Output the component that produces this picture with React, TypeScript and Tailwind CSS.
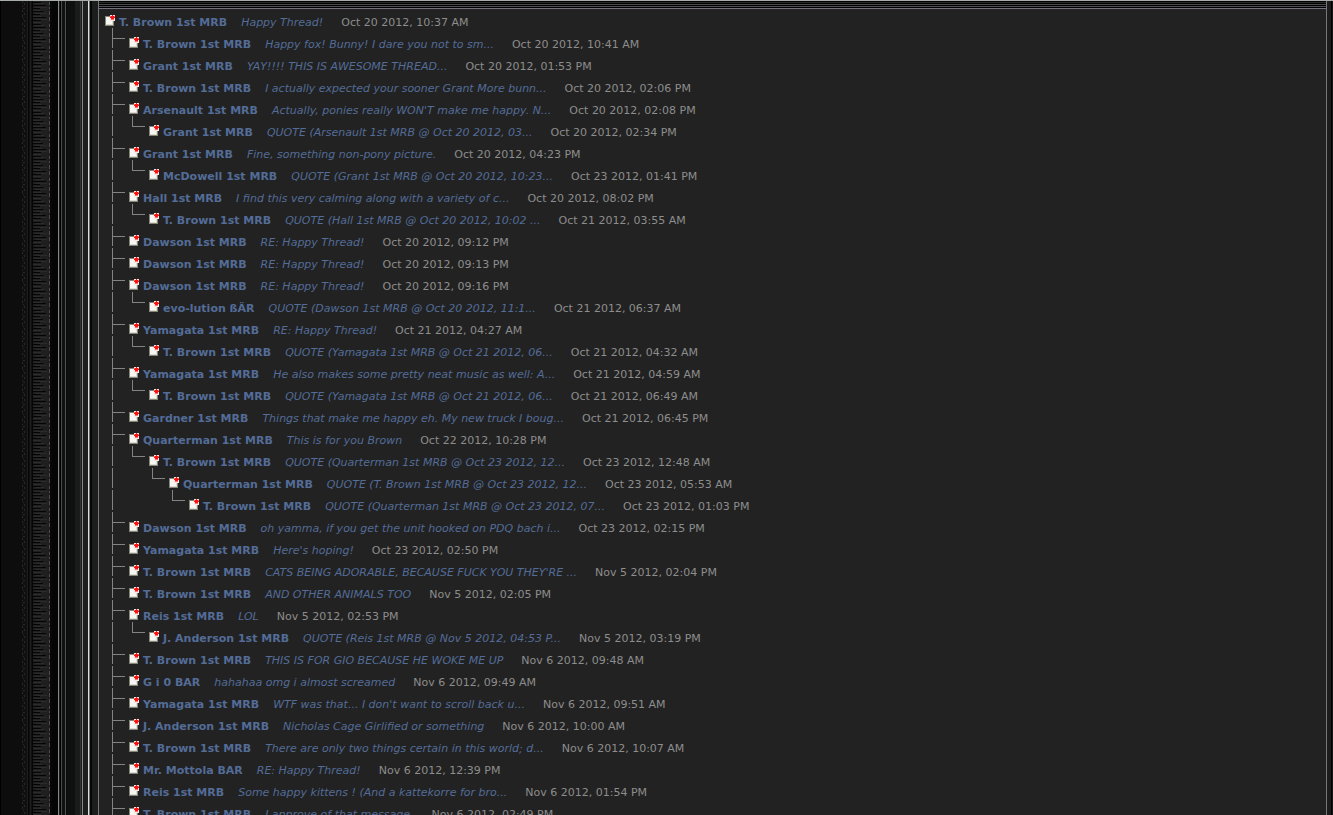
import React from "react";

type Post = [depth: number, author: string, text: string, date: string];

const posts: Post[] = [
  [0, "T. Brown 1st MRB", "Happy Thread!", "Oct 20 2012, 10:37 AM"],
  [1, "T. Brown 1st MRB", "Happy fox! Bunny! I dare you not to sm...", "Oct 20 2012, 10:41 AM"],
  [1, "Grant 1st MRB", "YAY!!!! THIS IS AWESOME THREAD...", "Oct 20 2012, 01:53 PM"],
  [1, "T. Brown 1st MRB", "I actually expected your sooner Grant More bunn...", "Oct 20 2012, 02:06 PM"],
  [1, "Arsenault 1st MRB", "Actually, ponies really WON'T make me happy. N...", "Oct 20 2012, 02:08 PM"],
  [2, "Grant 1st MRB", "QUOTE (Arsenault 1st MRB @ Oct 20 2012, 03...", "Oct 20 2012, 02:34 PM"],
  [1, "Grant 1st MRB", "Fine, something non-pony picture.", "Oct 20 2012, 04:23 PM"],
  [2, "McDowell 1st MRB", "QUOTE (Grant 1st MRB @ Oct 20 2012, 10:23...", "Oct 23 2012, 01:41 PM"],
  [1, "Hall 1st MRB", "I find this very calming along with a variety of c...", "Oct 20 2012, 08:02 PM"],
  [2, "T. Brown 1st MRB", "QUOTE (Hall 1st MRB @ Oct 20 2012, 10:02 ...", "Oct 21 2012, 03:55 AM"],
  [1, "Dawson 1st MRB", "RE: Happy Thread!", "Oct 20 2012, 09:12 PM"],
  [1, "Dawson 1st MRB", "RE: Happy Thread!", "Oct 20 2012, 09:13 PM"],
  [1, "Dawson 1st MRB", "RE: Happy Thread!", "Oct 20 2012, 09:16 PM"],
  [2, "evo-lution ßÄR", "QUOTE (Dawson 1st MRB @ Oct 20 2012, 11:1...", "Oct 21 2012, 06:37 AM"],
  [1, "Yamagata 1st MRB", "RE: Happy Thread!", "Oct 21 2012, 04:27 AM"],
  [2, "T. Brown 1st MRB", "QUOTE (Yamagata 1st MRB @ Oct 21 2012, 06...", "Oct 21 2012, 04:32 AM"],
  [1, "Yamagata 1st MRB", "He also makes some pretty neat music as well: A...", "Oct 21 2012, 04:59 AM"],
  [2, "T. Brown 1st MRB", "QUOTE (Yamagata 1st MRB @ Oct 21 2012, 06...", "Oct 21 2012, 06:49 AM"],
  [1, "Gardner 1st MRB", "Things that make me happy eh. My new truck I boug...", "Oct 21 2012, 06:45 PM"],
  [1, "Quarterman 1st MRB", "This is for you Brown", "Oct 22 2012, 10:28 PM"],
  [2, "T. Brown 1st MRB", "QUOTE (Quarterman 1st MRB @ Oct 23 2012, 12...", "Oct 23 2012, 12:48 AM"],
  [3, "Quarterman 1st MRB", "QUOTE (T. Brown 1st MRB @ Oct 23 2012, 12...", "Oct 23 2012, 05:53 AM"],
  [4, "T. Brown 1st MRB", "QUOTE (Quarterman 1st MRB @ Oct 23 2012, 07...", "Oct 23 2012, 01:03 PM"],
  [1, "Dawson 1st MRB", "oh yamma, if you get the unit hooked on PDQ bach i...", "Oct 23 2012, 02:15 PM"],
  [1, "Yamagata 1st MRB", "Here's hoping!", "Oct 23 2012, 02:50 PM"],
  [1, "T. Brown 1st MRB", "CATS BEING ADORABLE, BECAUSE FUCK YOU THEY'RE ...", "Nov 5 2012, 02:04 PM"],
  [1, "T. Brown 1st MRB", "AND OTHER ANIMALS TOO", "Nov 5 2012, 02:05 PM"],
  [1, "Reis 1st MRB", "LOL", "Nov 5 2012, 02:53 PM"],
  [2, "J. Anderson 1st MRB", "QUOTE (Reis 1st MRB @ Nov 5 2012, 04:53 P...", "Nov 5 2012, 03:19 PM"],
  [1, "T. Brown 1st MRB", "THIS IS FOR GIO BECAUSE HE WOKE ME UP", "Nov 6 2012, 09:48 AM"],
  [1, "G i 0 BAR", "hahahaa omg i almost screamed", "Nov 6 2012, 09:49 AM"],
  [1, "Yamagata 1st MRB", "WTF was that... I don't want to scroll back u...", "Nov 6 2012, 09:51 AM"],
  [1, "J. Anderson 1st MRB", "Nicholas Cage Girlified or something", "Nov 6 2012, 10:00 AM"],
  [1, "T. Brown 1st MRB", "There are only two things certain in this world; d...", "Nov 6 2012, 10:07 AM"],
  [1, "Mr. Mottola BAR", "RE: Happy Thread!", "Nov 6 2012, 12:39 PM"],
  [1, "Reis 1st MRB", "Some happy kittens ! (And a kattekorre for bro...", "Nov 6 2012, 01:54 PM"],
  [1, "T. Brown 1st MRB", "I approve of that message.", "Nov 6 2012, 02:49 PM"],
];

function PostIcon() {
  return (
    <svg className="mt-[9px] mr-1 h-[11px] w-[10px] shrink-0" viewBox="0 0 10 11" shapeRendering="crispEdges" aria-hidden="true">
      <path d="M0 1h9v10H0z" fill="#85857a" />
      <path d="M1 2h7v8H1z" fill="#f6f6f2" />
      <path d="M1 9h7v1H1zM7 6h1v4H7z" fill="#dcdcd4" />
      <path d="M5 0h5v6H5z" fill="#fbe6e6" />
      <path d="M5 1h5v1H5zM6 4h3v1H6z" fill="#ff7070" />
      <path d="M7 0h1v1h1v1h1v1H9v1H6V3H5V2h1V1h1z" fill="#ff1010" />
    </svg>
  );
}

/* One 20px tile of the tree: a through line, a branch, or a corner. */
function Connector({ kind }: { kind: "line" | "branch" | "corner" | "blank" }) {
  return (
    <svg className="h-5 w-5 shrink-0" viewBox="0 0 20 20" shapeRendering="crispEdges" fill="#838383" aria-hidden="true">
      {(kind === "line" || kind === "branch") && <path d="M0 0h1v20H0z" />}
      {kind === "branch" && <path d="M0 10h13v1H0z" />}
      {kind === "corner" && <path d="M0 0h1v10h12v1H0z" />}
    </svg>
  );
}

function PostRow({ post: [depth, author, text, date] }: { post: Post }) {
  return (
    <li className={`flex h-[22px] items-start whitespace-nowrap ${depth === 0 ? "pl-[6px]" : "pl-[13px]"}`}>
      {depth === 1 && <Connector kind="branch" />}
      {depth > 1 && <Connector kind="line" />}
      {Array.from({ length: Math.max(0, depth - 2) }, (_, i) => (
        <Connector key={i} kind="blank" />
      ))}
      {depth > 1 && <Connector kind="corner" />}
      <div className={depth === 0 ? "flex" : "-ml-[3px] flex"}>
        <PostIcon />
        <p className="flex pt-[10px] leading-[14px]">
          <a href="#author" className="mr-3.5 font-bold text-[#536c98]">{author}</a>
          <a href="#post" className="mr-[18px] text-[#536c98] italic">{text}</a>
          <span className="text-[#8d8d8d]">{date}</span>
        </p>
      </div>
    </li>
  );
}

/* Ribbed cloth, grooves and metal rails down the left side. */
function LeftFrame() {
  return (
    <div className="flex shrink-0" aria-hidden="true">
      <i className="w-px bg-black" />
      <i className="w-[21px] bg-[#0d0d0d]" />
      <svg className="w-[30px] self-stretch" shapeRendering="crispEdges">
        <defs>
          <pattern id="cloth" width="30" height="22" patternUnits="userSpaceOnUse">
            <path d="M0 0h30v22H0z" fill="#101010" />
            <path d="M0 0h1v2H0zM2 2h1v2H2zM0 5h1v1H0zM1 7h2v1H1zM0 9h1v2H0zM2 12h1v2H2zM0 14h1v2H0zM1 17h1v1H1zM2 19h1v2H2z" fill="#282828" />
            <path d="M5 0h1v22H5zM8 0h1v22H8z" fill="#1e1e1e" />
            <path d="M6 0h1v22H6zM10 0h1v22H10z" fill="#050505" />
            <path d="M11 0h17v22H11z" fill="#1f1f1f" />
            <path d="M11 1h8v1H11zM11 4h13v1H11zM11 7h7v1H11zM11 10h10v1H11zM11 13h7v1H11zM11 16h13v1H11zM11 19h8v1H11z" fill="#050505" />
            <path d="M13 2h9v1H13zM13 6h12v1H13zM11 9h8v1H11zM13 12h12v1H13zM11 15h9v1H11zM14 18h11v1H14zM11 21h8v1H11z" fill="#2b2b2b" />
            <path d="M27 1h1v3H27zM27 6h1v2H27zM27 10h1v4H27zM27 16h1v4H27z" fill="#4c4c4c" />
            <path d="M28 0h2v22H28z" fill="#080808" />
          </pattern>
        </defs>
        <rect width="30" height="100%" fill="url(#cloth)" />
      </svg>
      <i className="w-1.5 bg-[#050505]" />
      <i className="w-px bg-[#858585]" />
      <i className="w-px bg-[#1c1c1c]" />
      <i className="w-px bg-black" />
      <i className="w-px bg-[#4a4c4c]" />
      <i className="w-[3px] bg-[#101111]" />
      <i className="w-px bg-[#505252]" />
      <i className="w-px bg-[#090909]" />
      <i className="w-2 bg-[#0e0f0f]" />
      <i className="w-[5px] bg-[#1a1b1b]" />
      <i className="w-px bg-[#333535]" />
      <i className="w-px bg-[#1a1a1a]" />
      <i className="w-px bg-[#888a8a]" />
      <i className="w-[5px] bg-[#1d1e1e]" />
      <i className="w-px bg-[#dedede]" />
      <i className="w-px bg-[#6c6c6c]" />
      <i className="w-0.5 bg-[#050505]" />
      <i className="w-1.5 bg-[#1c1e1e]" />
    </div>
  );
}

function TopRails() {
  return (
    <div className="flex flex-col" aria-hidden="true">
      <i className="h-px bg-black" />
      <i className="h-px bg-[#252a25]" />
      <i className="h-px bg-black" />
      <i className="h-px bg-[#464a46]" />
      <i className="h-px bg-black" />
      <i className="h-px bg-[#514b59]" />
      <i className="h-px bg-black" />
      <i className="h-px bg-[#77717c]" />
    </div>
  );
}

export default function App() {
  return (
    <div className="h-screen overflow-hidden border-t border-[#a7abab] bg-black font-['Verdana','DejaVu_Sans',sans-serif] text-[11px]">
      <div className="flex min-h-full">
        <LeftFrame />
        <main className="min-w-0 flex-1 border-x border-[#777] bg-[#222]">
          <TopRails />
          <ul className="-mt-[3px]">
            {posts.map((post, i) => (
              <PostRow key={i} post={post} />
            ))}
          </ul>
        </main>
        <div className="flex shrink-0" aria-hidden="true">
          <i className="w-1 bg-[#1c1c1c]" />
          <i className="w-px bg-black" />
          <i className="w-px bg-[#161616]" />
        </div>
      </div>
    </div>
  );
}
